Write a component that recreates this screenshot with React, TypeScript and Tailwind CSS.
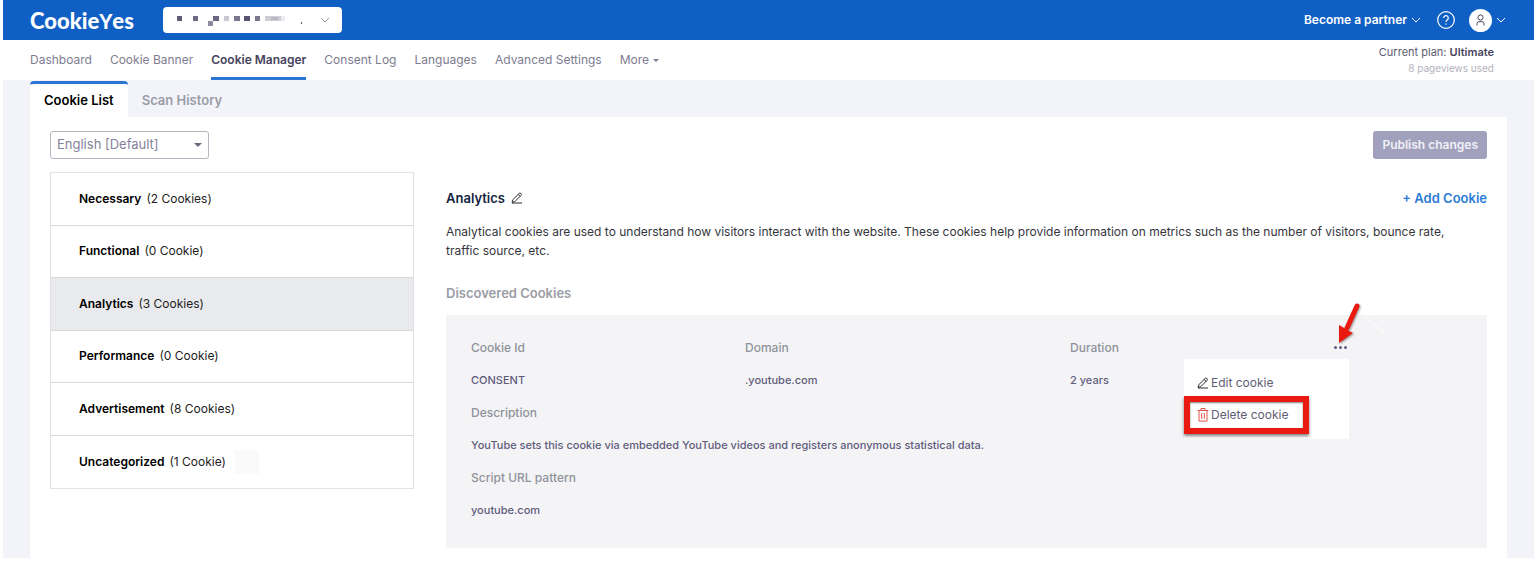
import { useState } from "react";
import type { ReactNode } from "react";

const navItems = [
  "Dashboard",
  "Cookie Banner",
  "Cookie Manager",
  "Consent Log",
  "Languages",
  "Advanced Settings",
];

const categories = [
  { name: "Necessary", count: "(2 Cookies)" },
  { name: "Functional", count: "(0 Cookie)" },
  { name: "Analytics", count: "(3 Cookies)" },
  { name: "Performance", count: "(0 Cookie)" },
  { name: "Advertisement", count: "(8 Cookies)" },
  { name: "Uncategorized", count: "(1 Cookie)" },
];

// x, y, width, height, colour of the blurred site name
const mosaic: [number, number, number, number, string][] = [
  [0, 3, 5, 5, "#5f5a72"],
  [16, 3, 5, 5, "#6e6a82"],
  [31, 8, 5, 5, "#8e8b9e"],
  [36, 3, 6, 5, "#6b6780"],
  [47, 3, 5, 5, "#c9c8d1"],
  [57, 3, 6, 5, "#7a7690"],
  [67, 3, 6, 5, "#5a5272"],
  [78, 3, 5, 5, "#7a7690"],
  [88, 3, 16, 5, "#cfced6"],
  [94, 4, 7, 3, "#b9b8c4"],
  [104, 3, 4, 5, "#ecebf0"],
  [124, 9, 1, 2, "#5f5a72"],
];

function Chevron() {
  return (
    <svg viewBox="0 0 10 6" fill="none" stroke="currentColor" className="h-[6px] w-[10px]">
      <path d="M1 1l4 4 4-4" />
    </svg>
  );
}

function Caret({ className }: { className?: string }) {
  return (
    <svg viewBox="0 0 8 4" fill="currentColor" className={className}>
      <path d="M0 0h8L4 4z" />
    </svg>
  );
}

function Pencil() {
  return (
    <svg viewBox="0 0 12 12" fill="none" stroke="#2b2b33" strokeLinejoin="round" className="h-3 w-3 shrink-0">
      <path d="M1 10.5l.8-2.8L8.2 1.4a1.1 1.1 0 011.6 0l.3.4a1.1 1.1 0 010 1.5L3.8 9.6z" />
      <path d="M7.2 2.4l2 2M1 11h10" />
    </svg>
  );
}

function Trash() {
  return (
    <svg viewBox="0 0 12 14" fill="none" stroke="#e0564a" className="h-[14px] w-3 shrink-0">
      <path d="M.5 2.5h11M4 2.5v-2h4v2M2 2.5v10.6h8V2.5M4.7 5v5.8M7.3 5v5.8" />
    </svg>
  );
}

function Logo() {
  return (
    <a href="#" className="flex items-baseline pt-[2px] font-['Lato',sans-serif] text-[22px] leading-6 font-black text-white">
      Cookie<span className="text-[20px]">Y</span>es
    </a>
  );
}

function Field({ label, children }: { label: string; children: ReactNode }) {
  return (
    <div className="flex flex-col gap-4">
      <dt className="text-xs font-medium text-[#8f929b]">{label}</dt>
      <dd className="text-[11px] font-medium text-[#5f5c7c]">{children}</dd>
    </div>
  );
}

export default function App() {
  const [category, setCategory] = useState("Analytics");
  const [menuOpen, setMenuOpen] = useState(true);

  return (
    <div className="bg-white pr-[2px] pb-1 pl-[3px] font-['Inter',sans-serif] text-xs">
      {/* Top bar */}
      <header className="flex h-10 items-center bg-[#105fc5] pr-7 pl-[27px] text-white">
        <Logo />
        <button
          type="button"
          aria-label="Select site"
          className="ml-[29px] flex h-[26px] w-[179px] items-center justify-between rounded bg-white pr-3 pl-[14px] text-[#9b9aa8]"
        >
          <svg viewBox="0 0 128 14" className="h-[14px] w-32">
            {mosaic.map(([x, y, w, h, fill]) => (
              <rect key={x} x={x} y={y} width={w} height={h} fill={fill} />
            ))}
          </svg>
          <Chevron />
        </button>
        <div className="ml-auto flex items-center">
          <button type="button" className="flex items-center gap-1 font-semibold">
            Become a partner
            <Chevron />
          </button>
          <button type="button" aria-label="Help" className="ml-4">
            <svg viewBox="0 0 18 18" fill="none" stroke="currentColor" strokeWidth="1.2" className="h-[18px] w-[18px]">
              <circle cx="9" cy="9" r="8.3" />
              <path d="M6.7 7a2.3 2.3 0 114 1.5C9.8 9.3 9 9.6 9 11M9 12.5v1.3" />
            </svg>
          </button>
          <button type="button" aria-label="Account" className="ml-[14px] flex items-center gap-1">
            <svg viewBox="0 0 23 23" fill="none" stroke="#4a4763" className="h-[23px] w-[23px]">
              <circle cx="11.5" cy="11.5" r="11.5" fill="#fff" stroke="none" />
              <circle cx="11.5" cy="8.5" r="2.6" />
              <path d="M8 16.5v-1.8a2 2 0 012-2h3a2 2 0 012 2v1.8" />
            </svg>
            <Chevron />
          </button>
        </div>
      </header>

      {/* Main navigation */}
      <nav className="flex h-10 items-center justify-between pr-10 pl-[27px] text-[#7e7c90]">
        <div className="flex h-10 gap-[18px]">
          {navItems.map((item) => (
            <a
              key={item}
              href="#"
              className={
                item === "Cookie Manager"
                  ? "flex items-center border-b-3 border-[#2b76d2] pt-[3px] font-semibold text-[#45435c]"
                  : "flex items-center"
              }
            >
              {item}
            </a>
          ))}
          <button type="button" className="flex items-center gap-1">
            More
            <Caret className="h-[3px] w-[6px]" />
          </button>
        </div>
        <div className="text-right text-[11px] leading-4">
          <p className="text-[#5c5a70]">
            Current plan: <span className="font-semibold text-[#45435c]">Ultimate</span>
          </p>
          <p className="text-[10px] text-[#b3b2bd]">8 pageviews used</p>
        </div>
      </nav>

      <div className="bg-[#f3f4fa] px-[27px]">
        {/* Tabs */}
        <div role="tablist" className="flex pt-px text-[13px] font-semibold">
          <button
            type="button"
            role="tab"
            aria-selected="true"
            className="h-9 rounded-t border-t-3 border-[#2b76d2] bg-white px-[14px] text-black"
          >
            Cookie List
          </button>
          <button type="button" role="tab" aria-selected="false" className="h-9 border-t-3 border-transparent px-[14px] text-[#9a9ca8]">
            Scan History
          </button>
        </div>

        <main className="bg-white px-5 pt-[14px] pb-[10px]">
          <div className="flex items-center justify-between">
            <div className="relative">
              <select
                aria-label="Language"
                className="block h-7 w-[159px] appearance-none rounded-[3px] border border-[#b5b4c0] bg-white px-[6px] text-[13px] text-[#84829a]"
              >
                <option>English [Default]</option>
              </select>
              <Caret className="pointer-events-none absolute top-3 right-[7px] h-1 w-2 text-[#6b697c]" />
            </div>
            <button type="button" className="h-7 rounded-[3px] bg-[#a2a1bd] px-[9px] font-semibold text-[#f1f1f8]">
              Publish changes
            </button>
          </div>

          <div className="mt-[13px] flex items-start gap-8">
            {/* Categories */}
            <ul className="grid h-[317px] w-[364px] shrink-0 grid-rows-6 divide-y divide-[#dcdce0] border border-[#e2e2e6]">
              {categories.map(({ name, count }) => (
                <li key={name} className={category === name ? "bg-[#e9eaed]" : ""}>
                  <button
                    type="button"
                    onClick={() => setCategory(name)}
                    className="flex h-full w-full items-center gap-[5px] px-7 text-[#1d1d22]"
                  >
                    <span className="font-semibold text-black">{name}</span>
                    {count}
                    {name === "Uncategorized" && <span className="ml-1 h-6 w-6 bg-[#fafafa]" />}
                  </button>
                </li>
              ))}
            </ul>

            {/* Category details */}
            <section className="min-w-0 flex-1">
              <div className="flex items-center justify-between pt-4 text-[13px] leading-5 font-semibold">
                <h1 className="flex items-center gap-[6px] text-[#13233f]">
                  Analytics
                  <button type="button" aria-label="Edit category">
                    <Pencil />
                  </button>
                </h1>
                <button type="button" className="text-[#2b7bd8]">
                  + Add Cookie
                </button>
              </div>
              <p className="mt-[14px] pr-5 text-xs leading-[19px] text-[#35353c]">
                Analytical cookies are used to understand how visitors interact with the website. These cookies help
                provide information on metrics such as the number of visitors, bounce rate, traffic source, etc.
              </p>
              <h2 className="mt-6 text-[13px] leading-[19px] font-semibold text-[#9a9da6]">Discovered Cookies</h2>

              <div className="relative mt-3 bg-[#f4f4f6] px-[25px] pt-[25px] pb-[30px] leading-4">
                <dl className="flex flex-col gap-[17px] leading-4">
                  <div className="grid grid-cols-[274fr_325fr_392fr]">
                    <Field label="Cookie Id">CONSENT</Field>
                    <Field label="Domain">.youtube.com</Field>
                    <Field label="Duration">2 years</Field>
                  </div>
                  <Field label="Description">
                    YouTube sets this cookie via embedded YouTube videos and registers anonymous statistical data.
                  </Field>
                  <Field label="Script URL pattern">youtube.com</Field>
                </dl>

                {/* Row menu */}
                <div className="absolute top-6 right-[138px]">
                  <button
                    type="button"
                    aria-label="Cookie actions"
                    onClick={() => setMenuOpen(!menuOpen)}
                    className="flex h-4 items-center gap-[2px] pr-[2px]"
                  >
                    <span className="h-[3px] w-[3px] rounded-full bg-[#5f5d80]" />
                    <span className="h-[3px] w-[3px] rounded-full bg-[#5f5d80]" />
                    <span className="h-[3px] w-[3px] rounded-full bg-[#5f5d80]" />
                  </button>
                  {menuOpen && (
                    <div className="absolute top-5 right-0 h-[80px] w-[165px] bg-white text-[#5f5d74]">
                      <button type="button" className="mt-4 ml-[13px] flex h-4 items-center gap-[2px]">
                        <Pencil />
                        Edit cookie
                      </button>
                      <button
                        type="button"
                        className="mt-[5px] flex h-[38px] w-[125px] items-center gap-[2px] border-[6px] border-[#ea1a10] pl-[7px] shadow-[0_2px_3px_rgba(0,0,0,0.5),inset_0_1px_2px_rgba(0,0,0,0.5)]"
                      >
                        <Trash />
                        Delete cookie
                      </button>
                    </div>
                  )}
                  {/* Callout arrow */}
                  <svg
                    viewBox="0 0 54 48"
                    className="pointer-events-none absolute -top-[39px] -right-[40px] h-12 w-[54px] drop-shadow-[1px_1px_1px_rgba(0,0,0,0.4)]"
                  >
                    <path d="M22 6L12 28" stroke="#ea1a10" strokeWidth="5" strokeLinecap="round" />
                    <path d="M4 43V25l5 3 4 2.5 5 2.5z" fill="#ea1a10" />
                  </svg>
                  <svg
                    viewBox="0 0 24 22"
                    fill="none"
                    stroke="#fff"
                    strokeLinecap="round"
                    className="pointer-events-none absolute -top-[25px] -right-[36px] h-[22px] w-6"
                  >
                    <path d="M3 2l18 15M22 15v3l-3 1" />
                  </svg>
                </div>
              </div>
            </section>
          </div>
        </main>
      </div>
    </div>
  );
}
